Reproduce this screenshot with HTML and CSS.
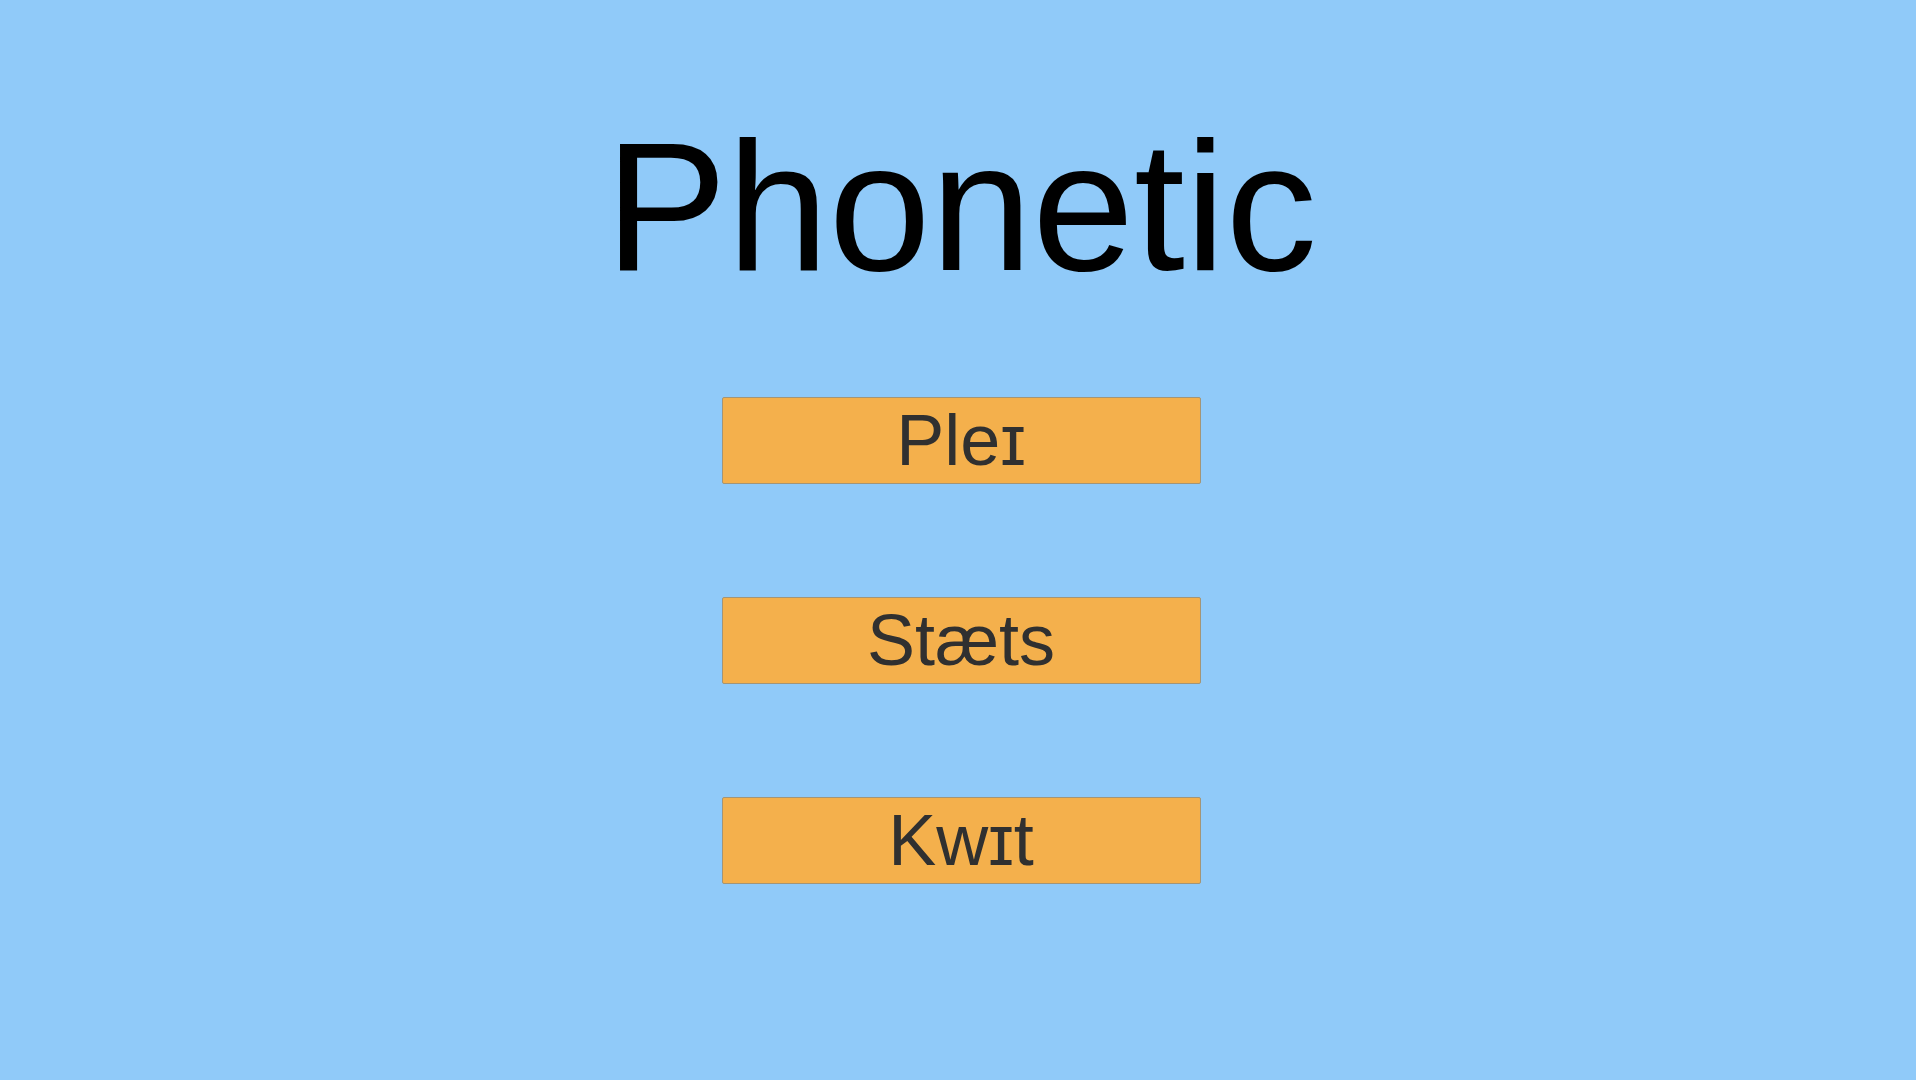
FILE: index.html
```html
<!DOCTYPE html>
<html lang="en">
<head>
<meta charset="utf-8">
<title>Phonetic</title>
<link rel="stylesheet" href="styles.css">
</head>
<body>
<main class="menu">
  <h1 class="title">Phonetic</h1>
  <div class="buttons">
    <button class="btn" type="button">Pleɪ</button>
    <button class="btn" type="button">Stæts</button>
    <button class="btn" type="button">Kwɪt</button>
  </div>
</main>
</body>
</html>
```

FILE: styles.css
```css
html, body {
  margin: 0;
  padding: 0;
  height: 100%;
}
body {
  background: #90caf9;
  font-family: "Liberation Sans", Arial, sans-serif;
  overflow: hidden;
}
.menu {
  display: flex;
  flex-direction: column;
  align-items: center;
  padding-top: 119px;
  padding-left: 6px;
}
.title {
  margin: 0;
  font-size: 183px;
  line-height: 176px;
  font-weight: normal;
  color: #000;
}
.buttons {
  margin-top: 102px;
  display: flex;
  flex-direction: column;
  gap: 113px;
}
.btn {
  box-sizing: border-box;
  width: 479px;
  height: 87px;
  padding: 0;
  margin: 0;
  background: #f4b04c;
  border: 1px solid #a39577;
  border-radius: 2px;
  font-family: "Liberation Sans", Arial, sans-serif;
  font-size: 72px;
  line-height: 85px;
  color: #303030;
  text-align: center;
}
```
